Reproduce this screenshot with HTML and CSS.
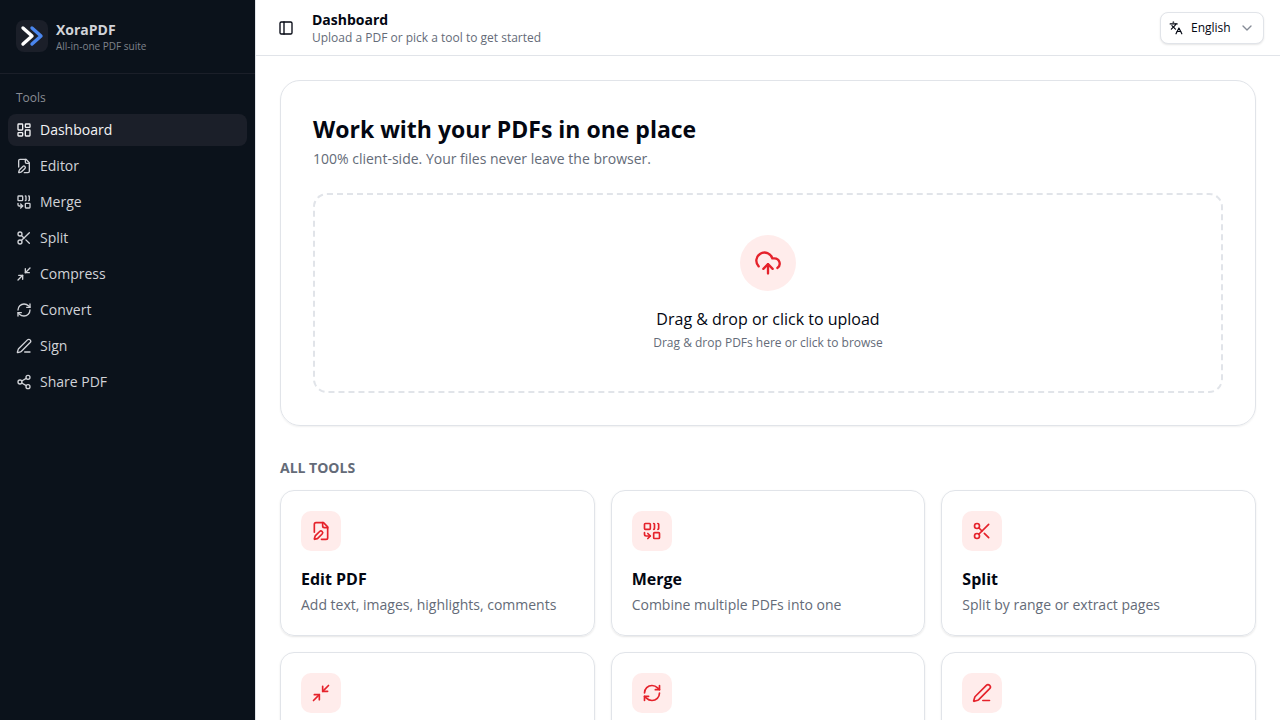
FILE: index.html
```html
<!DOCTYPE html>
<html lang="en">
<head>
<meta charset="utf-8">
<meta name="viewport" content="width=device-width, initial-scale=1">
<title>XoraPDF</title>
<link rel="stylesheet" href="styles.css">
</head>
<body>
<svg class="sprite" aria-hidden="true">
  <symbol id="dashboard" viewBox="0 0 24 24"><rect width="7" height="9" x="3" y="3" rx="1"/><rect width="7" height="5" x="14" y="3" rx="1"/><rect width="7" height="9" x="14" y="12" rx="1"/><rect width="7" height="5" x="3" y="16" rx="1"/></symbol>
  <symbol id="file-pen" viewBox="0 0 24 24"><path d="M12.5 22H18a2 2 0 0 0 2-2V7l-5-5H6a2 2 0 0 0-2 2v9.5"/><path d="M14 2v4a2 2 0 0 0 2 2h4"/><path d="M13.378 15.626a1 1 0 1 0-3.004-3.004l-5.01 5.012a2 2 0 0 0-.506.854l-.837 2.87a.5.5 0 0 0 .62.62l2.87-.837a2 2 0 0 0 .854-.506z"/></symbol>
  <symbol id="combine" viewBox="0 0 24 24"><path d="M14 3a1 1 0 0 1 1 1v5a1 1 0 0 1-1 1"/><path d="M19 3a1 1 0 0 1 1 1v5a1 1 0 0 1-1 1"/><path d="m7 15 3 3"/><path d="m7 21 3-3H5a2 2 0 0 1-2-2v-2"/><rect x="14" y="14" width="7" height="7" rx="1"/><rect x="3" y="3" width="7" height="7" rx="1"/></symbol>
  <symbol id="scissors" viewBox="0 0 24 24"><circle cx="6" cy="6" r="3"/><path d="M8.12 8.12 12 12"/><path d="M20 4 8.12 15.88"/><circle cx="6" cy="18" r="3"/><path d="M14.8 14.8 20 20"/></symbol>
  <symbol id="minimize" viewBox="0 0 24 24"><path d="m14 10 7-7"/><path d="M20 10h-6V4"/><path d="m3 21 7-7"/><path d="M4 14h6v6"/></symbol>
  <symbol id="refresh" viewBox="0 0 24 24"><path d="M3 12a9 9 0 0 1 9-9 9.75 9.75 0 0 1 6.74 2.74L21 8"/><path d="M21 3v5h-5"/><path d="M21 12a9 9 0 0 1-9 9 9.75 9.75 0 0 1-6.74-2.74L3 16"/><path d="M8 16H3v5"/></symbol>
  <symbol id="pen-line" viewBox="0 0 24 24"><path d="M13 21h8"/><path d="M21.174 6.812a1 1 0 0 0-3.986-3.987L3.842 16.174a2 2 0 0 0-.5.83l-1.321 4.352a.5.5 0 0 0 .623.622l4.353-1.32a2 2 0 0 0 .83-.497z"/></symbol>
  <symbol id="share" viewBox="0 0 24 24"><circle cx="18" cy="5" r="3"/><circle cx="6" cy="12" r="3"/><circle cx="18" cy="19" r="3"/><path d="m8.59 13.51 6.83 3.98"/><path d="m15.41 6.51-6.82 3.98"/></symbol>
  <symbol id="panel" viewBox="0 0 24 24"><rect width="18" height="18" x="3" y="3" rx="2"/><path d="M9 3v18"/></symbol>
  <symbol id="languages" viewBox="0 0 24 24"><path d="m5 8 6 6"/><path d="m4 14 6-6 2-3"/><path d="M2 5h12"/><path d="M7 2h1"/><path d="m22 22-5-10-5 10"/><path d="M14 18h6"/></symbol>
  <symbol id="chevron" viewBox="0 0 24 24"><path d="m6 9 6 6 6-6"/></symbol>
  <symbol id="cloud" viewBox="0 0 24 24"><path d="M12 13v8"/><path d="M4 14.899A7 7 0 1 1 15.71 8h1.79a4.5 4.5 0 0 1 2.5 8.242"/><path d="m8 17 4-4 4 4"/></symbol>
</svg>
<div class="app">
  <aside class="sidebar">
    <div class="brand">
      <svg class="logo" viewBox="0 0 32 32" aria-hidden="true">
        <rect class="logo-bg" width="32" height="32" rx="8"/>
        <path class="logo-back" d="M16 8l9 8-9 8"/>
        <path class="logo-front" d="M7 8l9 8-9 8"/>
      </svg>
      <div>
        <div class="brand-name">XoraPDF</div>
        <div class="brand-tag">All-in-one PDF suite</div>
      </div>
    </div>
    <nav class="nav" aria-label="Tools">
      <div class="nav-label">Tools</div>
      <ul class="nav-list">
        <li><a class="nav-item active" href="#" aria-current="page"><svg class="icon"><use href="#dashboard"/></svg>Dashboard</a></li>
        <li><a class="nav-item" href="#"><svg class="icon"><use href="#file-pen"/></svg>Editor</a></li>
        <li><a class="nav-item" href="#"><svg class="icon"><use href="#combine"/></svg>Merge</a></li>
        <li><a class="nav-item" href="#"><svg class="icon"><use href="#scissors"/></svg>Split</a></li>
        <li><a class="nav-item" href="#"><svg class="icon"><use href="#minimize"/></svg>Compress</a></li>
        <li><a class="nav-item" href="#"><svg class="icon"><use href="#refresh"/></svg>Convert</a></li>
        <li><a class="nav-item" href="#"><svg class="icon"><use href="#pen-line"/></svg>Sign</a></li>
        <li><a class="nav-item" href="#"><svg class="icon"><use href="#share"/></svg>Share PDF</a></li>
      </ul>
    </nav>
  </aside>
  <div class="page">
    <header class="topbar">
      <button class="toggle" type="button" aria-label="Toggle sidebar"><svg class="icon"><use href="#panel"/></svg></button>
      <div class="heading">
        <h1 class="page-title">Dashboard</h1>
        <p class="page-sub">Upload a PDF or pick a tool to get started</p>
      </div>
      <div class="language">
        <svg class="icon lang-icon"><use href="#languages"/></svg>
        <select class="lang-select" aria-label="Language"><option>English</option></select>
        <svg class="icon lang-chevron"><use href="#chevron"/></svg>
      </div>
    </header>
    <main class="content">
      <section class="hero">
        <h2 class="hero-title">Work with your PDFs in one place</h2>
        <p class="hero-sub">100% client-side. Your files never leave the browser.</p>
        <button class="dropzone" type="button">
          <span class="drop-icon"><svg class="icon"><use href="#cloud"/></svg></span>
          <span class="drop-title">Drag &amp; drop or click to upload</span>
          <span class="drop-sub">Drag &amp; drop PDFs here or click to browse</span>
        </button>
      </section>
      <section>
        <h2 class="section-title">All tools</h2>
        <div class="grid">
          <a class="card" href="#"><span class="card-icon"><svg class="icon"><use href="#file-pen"/></svg></span><h3 class="card-title">Edit PDF</h3><p class="card-text">Add text, images, highlights, comments</p></a>
          <a class="card" href="#"><span class="card-icon"><svg class="icon"><use href="#combine"/></svg></span><h3 class="card-title">Merge</h3><p class="card-text">Combine multiple PDFs into one</p></a>
          <a class="card" href="#"><span class="card-icon"><svg class="icon"><use href="#scissors"/></svg></span><h3 class="card-title">Split</h3><p class="card-text">Split by range or extract pages</p></a>
          <a class="card" href="#" aria-label="Compress"><span class="card-icon"><svg class="icon"><use href="#minimize"/></svg></span></a>
          <a class="card" href="#" aria-label="Convert"><span class="card-icon"><svg class="icon"><use href="#refresh"/></svg></span></a>
          <a class="card" href="#" aria-label="Sign"><span class="card-icon"><svg class="icon"><use href="#pen-line"/></svg></span></a>
        </div>
      </section>
    </main>
  </div>
</div>
</body>
</html>
```
FILE: styles.css
```css
:root {
  --ink: #030712;
  --muted: #646b78;
  --line: #e1e4e9;
  --red: #e5222b;
  --red-soft: #ffeceb;
  --night: #0b121b;
  --night-raised: #1b1f29;
}
* { box-sizing: border-box; }
body, h1, h2, h3, p, ul { margin: 0; padding: 0; }
body {
  color: var(--ink);
  background: #fff;
  font-family: "Open Sans", "Noto Sans", sans-serif;
  font-size: 14px;
  line-height: 20px;
}
a { color: inherit; text-decoration: none; }
button, select { font: inherit; color: inherit; }
.sprite { position: absolute; width: 0; height: 0; }
.icon {
  flex: none;
  width: 16px;
  height: 16px;
  fill: none;
  stroke: currentColor;
  stroke-width: 2;
  stroke-linecap: round;
  stroke-linejoin: round;
}

.app { display: flex; height: 100vh; overflow: hidden; }
.sidebar {
  flex: none;
  width: 256px;
  background: var(--night);
  color: #d1d3d8;
  border-right: 1px solid var(--line);
}
.brand {
  display: flex;
  align-items: flex-start;
  gap: 8px;
  padding: 20px 16px;
  border-bottom: 1px solid var(--night-raised);
}
.logo { width: 32px; height: 32px; fill: none; stroke-linecap: round; stroke-linejoin: round; stroke-width: 3.4; }
.logo-bg { fill: var(--night-raised); }
.logo-back { stroke: #4a86ee; }
.logo-front { stroke: #fff; }
.brand-name { font-weight: 700; line-height: 20px; }
.brand-tag { font-size: 10px; line-height: 13px; color: #7f838b; }
.nav { padding: 8px; }
.nav-label { padding: 0 8px; font-size: 12px; line-height: 32px; color: #8a8d95; }
.nav-list { display: flex; flex-direction: column; gap: 4px; list-style: none; }
.nav-item { display: flex; align-items: center; gap: 8px; height: 32px; padding: 0 8px; border-radius: 8px; }
.nav-item.active { background: var(--night-raised); color: #f3f4f6; }

.page { flex: 1; min-width: 0; }
.topbar {
  display: flex;
  align-items: center;
  gap: 12px;
  height: 56px;
  padding: 0 16px;
  border-bottom: 1px solid var(--line);
}
.toggle { display: flex; padding: 6px; border: 0; border-radius: 8px; background: none; }
.heading { flex: 1; }
.page-title { font-size: 14px; font-weight: 700; line-height: 20px; }
.page-sub { font-size: 12px; line-height: 16px; color: var(--muted); }
.language { position: relative; }
.lang-select {
  appearance: none;
  width: 104px;
  height: 32px;
  padding: 0 28px 0 30px;
  border: 1px solid var(--line);
  border-radius: 8px;
  background: #fff;
  box-shadow: 0 1px 2px rgb(0 0 0 / 10%);
  font-size: 12px;
}
.lang-icon, .lang-chevron { position: absolute; top: 9px; width: 14px; height: 14px; pointer-events: none; }
.lang-icon { left: 9px; }
.lang-chevron { top: 8px; right: 9px; width: 16px; height: 16px; color: #858b96; }

.content { display: flex; flex-direction: column; gap: 32px; padding: 24px; }
.hero {
  padding: 32px;
  border: 1px solid var(--line);
  border-radius: 20px;
  box-shadow: 0 1px 2px rgb(0 0 0 / 6%);
}
.hero-title { font-size: 23px; font-weight: 700; line-height: 32px; }
.hero-sub { margin-top: 4px; color: var(--muted); }
.dropzone {
  display: flex;
  flex-direction: column;
  align-items: center;
  width: 100%;
  margin-top: 24px;
  padding: 40px;
  border: 2px dashed var(--line);
  border-radius: 14px;
  background: none;
}
.drop-icon { display: grid; place-items: center; width: 56px; height: 56px; border-radius: 50%; background: var(--red-soft); color: var(--red); }
.drop-icon .icon { width: 28px; height: 28px; }
.drop-title { margin-top: 16px; font-size: 16px; line-height: 24px; }
.drop-sub { margin-top: 4px; font-size: 12px; line-height: 16px; color: var(--muted); }
.section-title { margin-bottom: 12px; font-size: 14px; font-weight: 700; line-height: 20px; text-transform: uppercase; color: var(--muted); }
.grid { display: grid; grid-template-columns: repeat(3, 1fr); gap: 16px; }
.card {
  padding: 20px;
  border: 1px solid var(--line);
  border-radius: 14px;
  box-shadow: 0 1px 2px rgb(0 0 0 / 10%);
  min-height: 146px;
}
.card-icon { display: grid; place-items: center; width: 40px; height: 40px; border-radius: 10px; background: var(--red-soft); color: var(--red); }
.card-icon .icon { width: 20px; height: 20px; }
.card-title { margin-top: 16px; font-size: 16px; font-weight: 700; line-height: 24px; }
.card-text { margin-top: 4px; color: var(--muted); }
```
